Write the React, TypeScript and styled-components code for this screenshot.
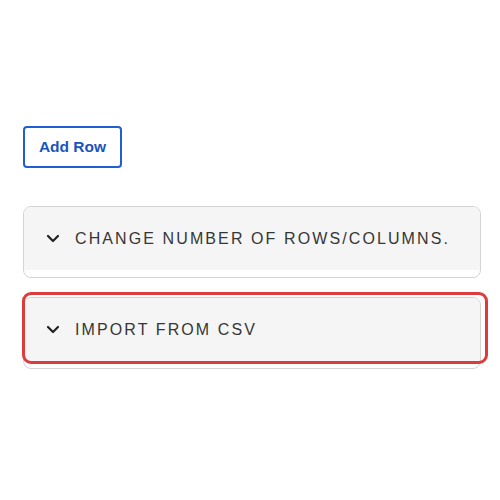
import React from 'react'
import styled, { createGlobalStyle } from 'styled-components'

const GlobalStyle = createGlobalStyle`
  html, body {
    margin: 0;
    padding: 0;
    background: #ffffff;
    font-family: "Liberation Sans", Arial, sans-serif;
  }
`

const Page = styled.main`
  width: 500px;
  height: 500px;
  box-sizing: border-box;
  padding: 126px 19px 0 23px;
  display: flex;
  flex-direction: column;
  align-items: flex-start;
`

const AddButton = styled.button`
  width: 99px;
  height: 42px;
  box-sizing: border-box;
  border: 2px solid #1f5fd1;
  border-radius: 4px;
  background: #ffffff;
  color: #1a52c2;
  font-family: "Liberation Sans", Arial, sans-serif;
  font-weight: 700;
  font-size: 15.5px;
  padding: 0;
  cursor: pointer;
`

const Stack = styled.div`
  margin-top: 38px;
  width: 458px;
  display: flex;
  flex-direction: column;
  gap: 19px;
`

const Panel = styled.section<{ $focused?: boolean }>`
  position: relative;
  box-sizing: border-box;
  height: 72px;
  border: 1px solid #d4d4d4;
  border-radius: 8px;
  background: #ffffff;

  &::after {
    content: '';
    display: ${(p) => (p.$focused ? 'block' : 'none')};
    position: absolute;
    top: -6px;
    left: -2px;
    right: -8px;
    bottom: 4px;
    border: 3px solid #dc3c3c;
    border-radius: 9px;
    pointer-events: none;
  }
`

const Header = styled.button`
  width: 100%;
  height: 63px;
  box-sizing: border-box;
  display: flex;
  align-items: center;
  gap: 15px;
  padding: 0 0 0 22px;
  border: none;
  border-radius: 7px 7px 0 0;
  background: #f5f5f5;
  color: #363636;
  font-family: "Liberation Sans", Arial, sans-serif;
  font-size: 16px;
  letter-spacing: 2.1px;
  text-transform: uppercase;
  text-align: left;
  cursor: pointer;
`

const Chevron = () => (
  <svg width="14" height="9" viewBox="0 0 14 9" fill="none">
    <polyline
      points="2,2 7,7 12,2"
      stroke="#222222"
      strokeWidth="2.2"
      strokeLinecap="round"
      strokeLinejoin="round"
    />
  </svg>
)

const sections = [
  { title: 'Change number of rows/columns.', focused: false },
  { title: 'Import from CSV', focused: true },
]

export default function App() {
  return (
    <>
      <GlobalStyle />
      <Page>
        <AddButton>Add Row</AddButton>
        <Stack>
          {sections.map((s) => (
            <Panel key={s.title} $focused={s.focused}>
              <Header>
                <Chevron />
                <span>{s.title}</span>
              </Header>
            </Panel>
          ))}
        </Stack>
      </Page>
    </>
  )
}
